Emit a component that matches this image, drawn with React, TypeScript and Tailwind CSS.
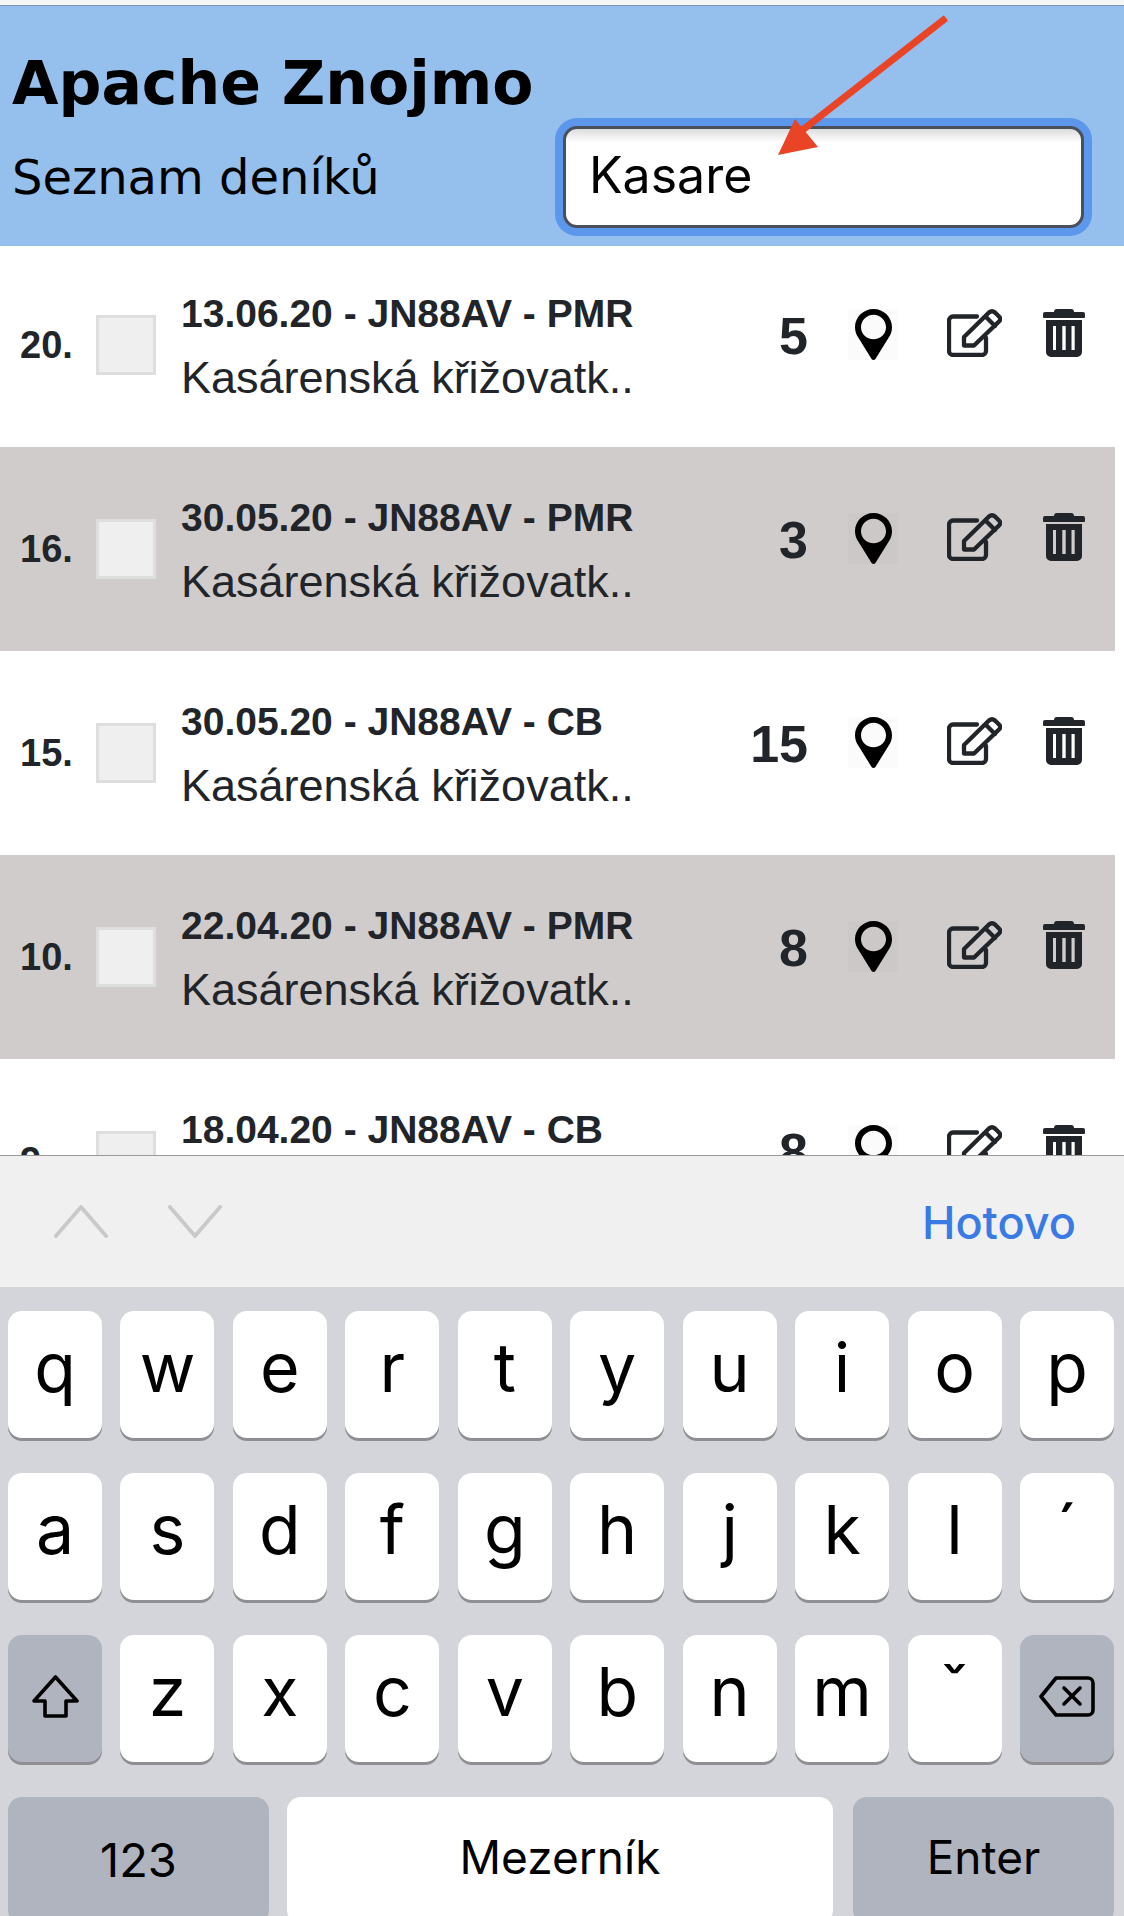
const entries = [
  { no: "20.", title: "13.06.20 - JN88AV - PMR", count: "5" },
  { no: "16.", title: "30.05.20 - JN88AV - PMR", count: "3" },
  { no: "15.", title: "30.05.20 - JN88AV - CB", count: "15" },
  { no: "10.", title: "22.04.20 - JN88AV - PMR", count: "8" },
  { no: "9.", title: "18.04.20 - JN88AV - CB", count: "8" },
]

const PinIcon = () => (
  <svg viewBox="0 0 37 51" className="h-[51px] w-[37px]">
    <path
      fillRule="evenodd"
      fill="#000"
      d="M18.500 0C8.300 0 0 8.200 0 18.300c0 4.200 1.400 7.900 3.700 11L16.600 50c.9 1.300 2.900 1.300 3.800 0l12.900-20.700c2.300-3.100 3.700-6.800 3.700-11C37 8.200 28.700 0 18.500 0zM18.500 5.800c6.900 0 12.500 5.600 12.500 12.500s-5.600 12-12.500 12S6 25.200 6 18.300 11.600 5.800 18.500 5.800z"
    />
  </svg>
)

const EditIcon = () => (
  <svg viewBox="0 0 55 48" className="h-[48px] w-[55px]" fill="none" stroke="#212529" strokeWidth="4.300" strokeLinejoin="round" strokeLinecap="round">
    <path d="M30 7.500H6a4 4 0 0 0-4 4V42a4 4 0 0 0 4 4h29a4 4 0 0 0 4-4V29" />
    <path d="M17 28 42 3.500q3-2.500 6 0l4 4q2.500 2.500 0 5L27 36.500H17z" />
    <path d="M38.500 7.500 48 17" />
  </svg>
)

const TrashIcon = () => (
  <svg viewBox="0 0 42 48" className="h-[48px] w-[42px]" fill="#212529">
    <path d="M14 0h14a3 3 0 0 1 3 3h9a2 2 0 0 1 2 2v3a1 1 0 0 1-1 1H1a1 1 0 0 1-1-1V5a2 2 0 0 1 2-2h9a3 3 0 0 1 3-3z" />
    <path
      fillRule="evenodd"
      d="M3 11h36v32a5 5 0 0 1-5 5H8a5 5 0 0 1-5-5zM10 17v24h3V17zM19.300 17v24h3.400V17zM28.500 17v24h3.200V17z"
    />
  </svg>
)

const ShiftIcon = () => (
  <svg viewBox="0 0 47 43" className="h-[43px] w-[47px]" fill="none" stroke="#000" strokeWidth="3.600" strokeLinejoin="round">
    <path d="M23.500 2 45 26H34v15H13V26H2z" />
  </svg>
)

const BackspaceIcon = () => (
  <svg viewBox="0 0 56 41" className="h-[41px] w-[56px]" fill="none" stroke="#000" strokeWidth="3.600" strokeLinejoin="round" strokeLinecap="round">
    <path d="M17 2h32a5 5 0 0 1 5 5v27a5 5 0 0 1-5 5H17L2 20.500z" />
    <path d="M25 12l16 16M41 12 25 28" />
  </svg>
)

const Key = ({ label }: { label: string }) => (
  <div className="flex h-[127px] items-center justify-center rounded-[14px] bg-white pb-[15px] text-[68px] leading-none text-black shadow-[0_3px_0_#8e8e93]">
    {label}
  </div>
)

const Row = ({ entry, shaded }: { entry: (typeof entries)[number]; shaded: boolean }) => (
  <div className={`flex h-[204px] shrink-0 items-center text-[#212529] ${shaded ? "bg-[#d1cccc]" : "bg-white"}`}>
    <div className="w-[96px] pl-[20px] text-[38px] font-bold leading-none">{entry.no}</div>
    <div className="h-[60px] w-[60px] border-[3px] border-[#dedede] bg-[#efefef]" />
    <div className="ml-[25px] w-[501px]">
      <div className="whitespace-nowrap text-[39px] font-bold leading-[66px]">{entry.title}</div>
      <div className="whitespace-nowrap text-[45px] leading-[62px]">Kasárenská křižovatk..</div>
    </div>
    <div className="ml-[46px] flex items-center pb-[24px]">
      <div className="w-[80px] pt-[5px] text-right text-[52px] font-bold leading-none">{entry.count}</div>
      <div className="ml-[40px] mt-[2px] flex h-[51px] w-[50px] justify-center bg-black/[0.015]">
        <PinIcon />
      </div>
      <div className="ml-[49px]">
        <EditIcon />
      </div>
      <div className="ml-[41px]">
        <TrashIcon />
      </div>
    </div>
  </div>
)

export default function App() {
  return (
    <div className="relative flex h-[1916px] w-[1124px] flex-col overflow-hidden bg-white font-['Liberation_Sans',sans-serif]">
      <div className="h-[6px] shrink-0 border-b border-[#7b93b8] bg-[#f7f7f7]" />

      {/* Header */}
      <header className="relative z-10 flex h-[240px] shrink-0 justify-between bg-[#95bfec] font-['DejaVu_Sans',sans-serif] text-black">
        <div className="pl-[12px]">
          <h1 className="mt-[42px] text-[60px] font-bold leading-[70px]">Apache Znojmo</h1>
          <p className="mt-[29px] text-[48px] leading-[60px]">Seznam deníků</p>
        </div>
        <div className="mr-[40px] mt-[120px] flex h-[102px] w-[521px] items-center rounded-[14px] border-[3px] border-[#4a4f5c] bg-white bg-gradient-to-b from-[#dcdcdc] from-0% to-white to-[14%] pb-[4px] pl-[23px] font-['Inter',sans-serif] text-[50px] ring-[8px] ring-[#5c97ec]">
          Kasare
        </div>
      </header>

      {/* Diary list */}
      <div className="-mt-[3px] mr-[9px] flex min-h-0 flex-1 flex-col overflow-hidden">
        {entries.map((entry, i) => (
          <Row key={entry.no} entry={entry} shaded={i % 2 === 1} />
        ))}
      </div>

      {/* iOS keyboard */}
      <div className="h-[761px] shrink-0 bg-[#d3d5db] font-['Inter',sans-serif]">
        <div className="flex h-[132px] items-center border-t border-[#9a9a9a] bg-[#f0f0f1] pl-[54px] pr-[48px]">
          <svg viewBox="0 0 56 34" className="h-[33px] w-[54px]" fill="none" stroke="#c9c9c9" strokeWidth="4" strokeLinecap="round" strokeLinejoin="round">
            <path d="M2 32 28 2l26 30" />
          </svg>
          <svg viewBox="0 0 56 34" className="ml-[60px] h-[33px] w-[54px]" fill="none" stroke="#c9c9c9" strokeWidth="4" strokeLinecap="round" strokeLinejoin="round">
            <path d="M2 2l26 30L54 2" />
          </svg>
          <span className="ml-auto pt-[2px] text-[45px] font-medium leading-none text-[#3a7ae4]">Hotovo</span>
        </div>

        <div className="grid grid-cols-10 gap-x-[18.4px] gap-y-[35px] pl-[8px] pr-[10px] pt-[24px]">
          {"qwertyuiop".split("").map((k) => (
            <Key key={k} label={k} />
          ))}
          {"asdfghjkl´".split("").map((k) => (
            <Key key={k} label={k} />
          ))}
          <div className="flex h-[127px] items-center justify-center rounded-[14px] bg-[#b0b4bf] pb-[4px] shadow-[0_3px_0_#8e8e93]">
            <ShiftIcon />
          </div>
          {"zxcvbnmˇ".split("").map((k) => (
            <Key key={k} label={k} />
          ))}
          <div className="flex h-[127px] items-center justify-center rounded-[14px] bg-[#b0b4bf] pb-[4px] shadow-[0_3px_0_#8e8e93]">
            <BackspaceIcon />
          </div>
        </div>

        <div className="mt-[35px] flex pl-[8px] pr-[10px] text-[46px] text-black">
          <div className="flex h-[127px] w-[261px] items-center justify-center rounded-[14px] bg-[#b0b4bf] text-[47px]">123</div>
          <div className="ml-[18px] flex h-[127px] w-[546px] items-center justify-center rounded-[14px] bg-white pb-[6px]">Mezerník</div>
          <div className="ml-[20px] flex h-[127px] w-[261px] items-center justify-center rounded-[14px] bg-[#b0b4bf] pb-[6px]">Enter</div>
        </div>
      </div>

      {/* Red annotation arrow */}
      <svg className="absolute left-0 top-0 z-20 h-[200px] w-[1124px]" viewBox="0 0 1124 200">
        <path d="M946 18 800 132" stroke="#ea4427" strokeWidth="7" fill="none" />
        <path d="M778 155l17-36 23 28z" fill="#ea4427" />
      </svg>
    </div>
  )
}
